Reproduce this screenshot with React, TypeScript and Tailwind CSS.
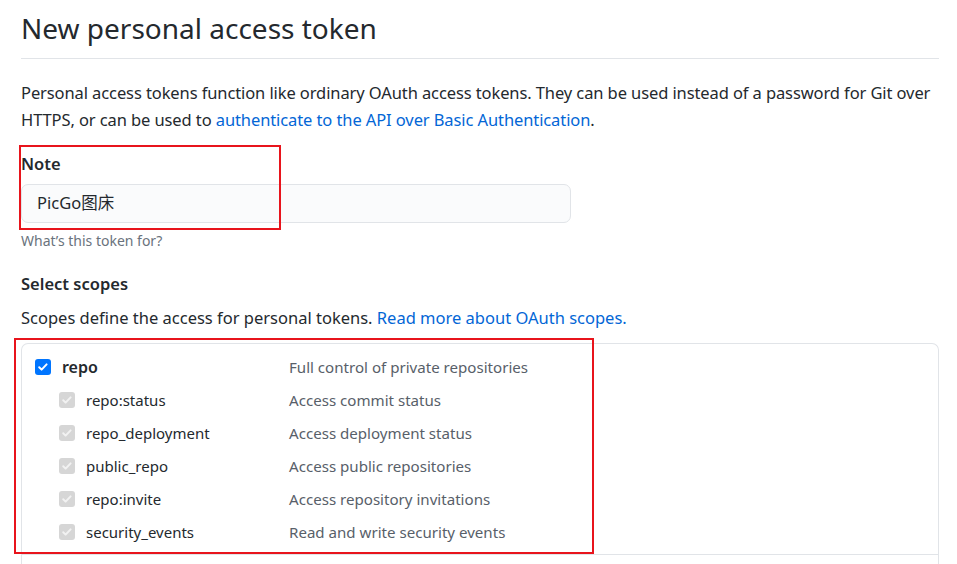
import React from 'react';

interface Scope {
  name: string;
  description: string;
}

const subScopes: Scope[] = [
  { name: 'repo:status', description: 'Access commit status' },
  { name: 'repo_deployment', description: 'Access deployment status' },
  { name: 'public_repo', description: 'Access public repositories' },
  { name: 'repo:invite', description: 'Access repository invitations' },
  { name: 'security_events', description: 'Read and write security events' },
];

const CheckBox: React.FC<{ disabled?: boolean }> = ({ disabled }) => (
  <span
    className={`w-4 h-4 rounded-[3px] flex items-center justify-center shrink-0 ${
      disabled ? 'bg-[#d6d6d6]' : 'bg-[#0075ff]'
    }`}
  >
    <svg className="w-3 h-3" viewBox="0 0 12 12" fill="none">
      <path
        d="M2.2 6.2l2.4 2.4 5-5.2"
        stroke={disabled ? '#f2f2f2' : '#ffffff'}
        strokeWidth="2"
        strokeLinecap="round"
        strokeLinejoin="round"
      />
    </svg>
  </span>
);

const App: React.FC = () => {
  return (
    <div
      className="relative w-[957px] h-[564px] overflow-hidden bg-white text-[#24292e]"
      style={{ fontFamily: '"Noto Sans", "Noto Sans CJK SC", sans-serif' }}
    >
      <div className="pl-[21px] pr-[18px]">
        <h1 className="text-[28px] font-normal leading-[36px] pt-[10px] pb-[12px] border-b border-[#e1e4e8]">
          New personal access token
        </h1>

        <p className="text-[16.5px] leading-[27px] mt-[20px] tracking-[-0.1px]">
          <span>
            Personal access tokens function like ordinary OAuth access tokens. They can be used instead of a password for Git over HTTPS, or can be used to{' '}
          </span>
          <a className="text-[#0366d6]">authenticate to the API over Basic Authentication</a>
          <span>.</span>
        </p>

        <div className="mt-[19px]">
          <div className="text-[16.5px] font-semibold leading-[24px]">Note</div>
          <div className="mt-[8px] w-[550px] h-[39px] rounded-[7px] border border-[#e1e4e8] bg-[#fafbfc] flex items-center pl-[15px] text-[16.5px]">
            PicGo图床
          </div>
          <div className="text-[14px] text-[#6a737d] mt-[8px] leading-[20px]">What’s this token for?</div>
        </div>

        <div className="mt-[21px]">
          <div className="text-[16.5px] font-semibold leading-[24px]">Select scopes</div>
          <p className="text-[16.5px] leading-[24px] mt-[10px]">
            <span>Scopes define the access for personal tokens. </span>
            <a className="text-[#0366d6]">Read more about OAuth scopes.</a>
          </p>
        </div>

        <div className="mt-[13px] border border-[#e1e4e8] rounded-t-[7px] border-b-0 h-[240px]">
          <div className="pt-[11px] pb-[10px] border-b border-[#e1e4e8]">
            <div className="flex items-center h-[24px]">
              <div className="w-[267px] flex items-center pl-[13px] gap-[11px]">
                <CheckBox />
                <span className="text-[16px] font-semibold">repo</span>
              </div>
              <span className="text-[15.1px] text-[#586069]">Full control of private repositories</span>
            </div>
            {subScopes.map((s) => (
              <div key={s.name} className="flex items-center h-[24px] mt-[9px]">
                <div className="w-[267px] flex items-center pl-[37px] gap-[11px]">
                  <CheckBox disabled />
                  <span className="text-[15px]">{s.name}</span>
                </div>
                <span className="text-[15.1px] text-[#586069]">{s.description}</span>
              </div>
            ))}
          </div>
        </div>
      </div>

      {/* annotation boxes */}
      <div className="absolute left-[19px] top-[145px] w-[262px] h-[85px] border-2 border-[#e8141c]" />
      <div className="absolute left-[14px] top-[338px] w-[580px] h-[216px] border-2 border-[#e8141c]" />
    </div>
  );
};

export default App;
